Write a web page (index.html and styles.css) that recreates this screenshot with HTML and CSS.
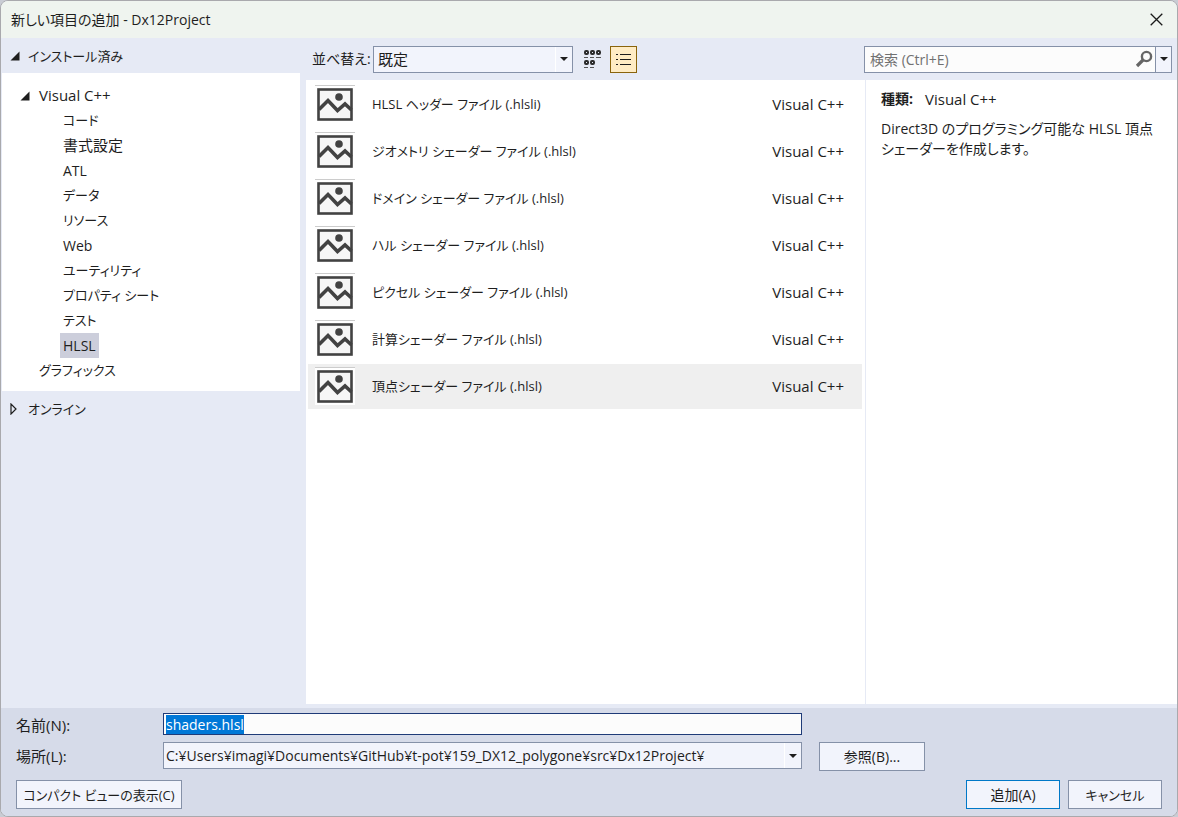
FILE: index.html
```
<!DOCTYPE html>
<html lang="ja">
<head>
<meta charset="utf-8">
<title>新しい項目の追加 - Dx12Project</title>
<link rel="stylesheet" href="styles.css">
</head>
<body>
<svg class="defs" aria-hidden="true">
  <symbol id="picture" viewBox="0 0 36 33">
    <rect x="1.5" y="1.5" width="33" height="30" fill="#f6f6f6" stroke="#424242" stroke-width="2.6"/>
    <path d="M2 21.5 L11 12.5 L20.5 22.5 L28 16 L34.5 22" fill="none" stroke="#424242" stroke-width="3.6"/>
    <circle cx="22" cy="9" r="3.8" fill="#424242"/>
  </symbol>
  <symbol id="open" viewBox="0 0 10 10"><path d="M9.500 .5V9.500H.5Z" fill="#1e1e1e"/></symbol>
  <symbol id="down" viewBox="0 0 8 4"><path d="M0 0H8L4 4Z" fill="#1e1e1e"/></symbol>
</svg>
<main class="dialog">
  <header class="titlebar">
    <h1 class="title">新しい項目の追加 - Dx12Project</h1>
    <button class="close" type="button" aria-label="閉じる"><svg width="13" height="13" viewBox="0 0 13 13"><path d="M.7.7 12.3 12.3M12.3.7.7 12.3" stroke="#1a1a1a" stroke-width="1.3"/></svg></button>
  </header>
  <div class="body">
    <nav class="sidebar">
      <button class="section" type="button"><svg class="arrow"><use href="#open"/></svg><span class="kana">インストール済み</span></button>
      <ul class="tree">
        <li class="group large"><svg class="arrow"><use href="#open"/></svg>Visual C++</li>
        <li class="leaf kana">コード</li>
        <li class="leaf large">書式設定</li>
        <li class="leaf">ATL</li>
        <li class="leaf kana">データ</li>
        <li class="leaf kana">リソース</li>
        <li class="leaf">Web</li>
        <li class="leaf kana">ユーティリティ</li>
        <li class="leaf kana">プロパティ シート</li>
        <li class="leaf kana">テスト</li>
        <li class="leaf"><span class="chosen">HLSL</span></li>
        <li class="root kana">グラフィックス</li>
      </ul>
      <button class="section" type="button"><svg class="arrow" viewBox="0 0 10 12"><path d="M1 1V11L6 6Z" fill="none" stroke="#1e1e1e" stroke-width="1.2"/></svg><span class="kana">オンライン</span></button>
    </nav>
    <section class="content">
      <div class="toolbar">
        <label class="sort-label" for="sort">並べ替え:</label>
        <div class="combo sort"><select id="sort" class="large"><option>既定</option></select><span class="drop"><svg width="8" height="4"><use href="#down"/></svg></span></div>
        <button class="view" type="button" aria-label="アイコン表示"><svg width="18" height="20" viewBox="0 0 18 20">
          <g fill="none" stroke="#2b2b2b" stroke-width="2"><rect x="1" y="2" width="3" height="3" rx="1"/><rect x="7" y="2" width="3" height="3" rx="1"/><rect x="13" y="2" width="3" height="3" rx="1"/><rect x="1" y="12" width="3" height="3" rx="1"/><rect x="7" y="12" width="3" height="3" rx="1"/></g>
          <path d="M0 8.500H4M6 8.500H10M12 8.500H17M0 18.500H4M6 18.500H10" stroke="#555"/></svg></button>
        <button class="view active" type="button" aria-label="一覧表示"><svg width="15" height="13" viewBox="0 0 15 13"><path d="M0 1.500H2M0 6.500H2M0 11.500H2M4 1.500H15M4 6.500H15M4 11.500H15" stroke="#1e1e1e"/></svg></button>
        <div class="search"><input type="search" aria-label="検索" placeholder="検索 (Ctrl+E)"><button class="find" type="button" aria-label="検索"><svg width="18" height="18" viewBox="0 0 18 18"><circle cx="11.500" cy="6.500" r="4.600" fill="none" stroke="#666" stroke-width="2.400"/><path d="M8 10 2 16" stroke="#666" stroke-width="3.200"/></svg></button><button class="more" type="button" aria-label="検索オプション"><svg width="8" height="4"><use href="#down"/></svg></button></div>
      </div>
      <div class="panes">
        <ul class="items">
          <li class="item"><svg class="pic"><use href="#picture"/></svg><span class="name">HLSL ヘッダー ファイル (.hlsli)</span><span class="large">Visual C++</span></li>
          <li class="item"><svg class="pic"><use href="#picture"/></svg><span class="name">ジオメトリ シェーダー ファイル (.hlsl)</span><span class="large">Visual C++</span></li>
          <li class="item"><svg class="pic"><use href="#picture"/></svg><span class="name">ドメイン シェーダー ファイル (.hlsl)</span><span class="large">Visual C++</span></li>
          <li class="item"><svg class="pic"><use href="#picture"/></svg><span class="name">ハル シェーダー ファイル (.hlsl)</span><span class="large">Visual C++</span></li>
          <li class="item"><svg class="pic"><use href="#picture"/></svg><span class="name">ピクセル シェーダー ファイル (.hlsl)</span><span class="large">Visual C++</span></li>
          <li class="item"><svg class="pic"><use href="#picture"/></svg><span class="name">計算シェーダー ファイル (.hlsl)</span><span class="large">Visual C++</span></li>
          <li class="item selected"><svg class="pic"><use href="#picture"/></svg><span class="name">頂点シェーダー ファイル (.hlsl)</span><span class="large">Visual C++</span></li>
        </ul>
        <aside class="details">
          <p class="kind"><b>種類:</b><span class="large">Visual C++</span></p>
          <p class="about">Direct3D のプログラミング可能な HLSL 頂点<br>シェーダーを作成します。</p>
        </aside>
      </div>
    </section>
  </div>
  <form class="footer">
    <div class="fields">
      <label class="large" for="name">名前(N):</label>
      <input class="textbox" id="name" type="text" value="shaders.hlsl" autofocus>
      <label class="large second" for="place">場所(L):</label>
      <div class="combo place"><select id="place"><option>C:¥Users¥imagi¥Documents¥GitHub¥t-pot¥159_DX12_polygone¥src¥Dx12Project¥</option></select><span class="drop"><svg width="8" height="4"><use href="#down"/></svg></span></div>
      <button class="button browse" type="button">参照(B)...</button>
    </div>
    <div class="actions">
      <button class="button compact kana" type="button">コンパクト ビューの表示(C)</button>
      <button class="button primary" type="button">追加(A)</button>
      <button class="button kana" type="button">キャンセル</button>
    </div>
  </form>
</main>
<script src="main.js"></script>
</body>
</html>
```
FILE: styles.css
```
* { box-sizing: border-box; }

body {
  margin: 0;
  background: #c9ccd4;
  color: #1e1e1e;
  font: 14px/20px "Open Sans", "Noto Sans CJK JP", sans-serif;
  font-feature-settings: "palt";
}

button, input, select {
  margin: 0;
  color: inherit;
  font: inherit;
  font-feature-settings: inherit;
}

ul, p, h1 { margin: 0; padding: 0; list-style: none; }
svg { display: block; flex: none; }
.defs { display: none; }
.kana { font-size: 13px; }
.large { font-size: 15px; }

.dialog {
  display: flex;
  flex-direction: column;
  min-height: 100vh;
  border: 1px solid #a9a9ad;
  border-radius: 8px;
  background: #e6eaf5;
  overflow: hidden;
}

.titlebar {
  display: flex;
  align-items: center;
  justify-content: space-between;
  height: 37px;
  padding: 0 7px 0 10px;
  background: #eff4ef;
}
.title { font-size: 14px; font-weight: 400; }
.close { padding: 7px; border: 0; background: none; }

.body {
  display: grid;
  grid-template-columns: 305px 1fr;
  flex: 1;
}

.section {
  display: flex;
  align-items: center;
  gap: 8px;
  height: 35px;
  padding: 0 0 0 9px;
  border: 0;
  background: none;
}
.arrow { width: 10px; height: 10px; }
.section .arrow[viewBox] { height: 12px; }

.tree {
  margin: 0 6px 0 1px;
  padding: 10px 0 8px;
  background: #fff;
  line-height: 25px;
}
.group { display: flex; align-items: center; gap: 9px; padding-left: 18px; }
.root { padding-left: 37px; }
.leaf { padding-left: 61px; }
.chosen { display: inline-block; margin-left: -3px; padding: 0 3px; background: #cccedb; }

.content { display: flex; flex-direction: column; min-width: 0; }

.toolbar {
  display: flex;
  align-items: center;
  height: 42px;
  padding: 0 5px 0 6px;
}
.sort-label { width: 61px; white-space: nowrap; }

.combo { position: relative; height: 27px; border: 1px solid #8591a8; background: #f2f4fc; }
.combo select {
  width: 100%;
  height: 100%;
  padding: 0 24px 0 4px;
  border: 0;
  outline: 0;
  background: none;
  appearance: none;
}
.drop {
  position: absolute;
  inset: 0 0 0 auto;
  display: grid;
  place-items: center;
  width: 17px;
  border-left: 1px solid #fff;
  pointer-events: none;
}
.sort { width: 200px; margin-right: 6px; }
.combo.place select { padding-left: 2px; }

.view {
  display: grid;
  place-items: center;
  width: 27px;
  height: 27px;
  margin-right: 4px;
  padding: 0;
  border: 0;
  background: none;
}
.active { border: 1px solid #8a640c; background: #ffecc4; }

.search {
  display: flex;
  width: 308px;
  height: 27px;
  margin-left: auto;
  border: 1px solid #8591a8;
  background: #fcfcfc;
}
.search input { flex: 1; min-width: 0; padding: 2px 5px 0; border: 0; outline: 0; background: none; }
.search input::placeholder { color: #717171; }
.find, .more { display: grid; place-items: center; padding: 0 2px; border: 0; background: none; }
.more { width: 16px; border-left: 1px solid #8591a8; background: #f2f4fc; }

.panes {
  display: grid;
  grid-template-columns: 1fr 312px;
  flex: 1;
  margin-bottom: 4px;
  background: #fff;
}
.items { display: flex; flex-direction: column; gap: 2px; padding: 2px 3px 0 2px; }
.item { display: flex; align-items: center; gap: 17px; height: 45px; padding: 0 18px 2px 7px; white-space: nowrap; }
.selected { background: #efefef; }
.pic { width: 40px; height: 38px; padding: 2px; border-top: 1px solid #ccc; background: #fff; }
.name { flex: 1; font-size: 13px; }

.details { padding: 9px 16px 0 15px; border-left: 1px solid #e6eaf5; }
.kind { display: flex; gap: 12px; margin-bottom: 10px; }
.kind b { font-weight: 700; }
.about { white-space: nowrap; }

.footer { padding: 5px 15px 7px; background: #d6dbe9; }
.fields {
  display: grid;
  grid-template-columns: 147px minmax(0, 639px) 123px;
  row-gap: 7px;
}
.fields label { padding-top: 2px; }
.fields .second { grid-column: 1; padding-top: 4px; }
.textbox {
  height: 22px;
  padding: 0 2px;
  border: 1px solid #1f3b78;
  outline: 0;
  background: #fcfcfc;
}
.textbox::selection { background: #0078d7; color: #fff; }
.browse { margin-left: 17px; }

.button { height: 29px; padding: 0; border: 1px solid #8591a8; background: #f2f4fc; }
.actions { display: flex; gap: 8px; margin-top: 9px; }
.actions .button { width: 94px; }
.actions .compact { width: 166px; margin-right: auto; }
.actions .primary { border-color: #0078c8; }
```
FILE: main.js
```
const nameBox = document.getElementById("name");
nameBox.focus();
nameBox.select();
```
